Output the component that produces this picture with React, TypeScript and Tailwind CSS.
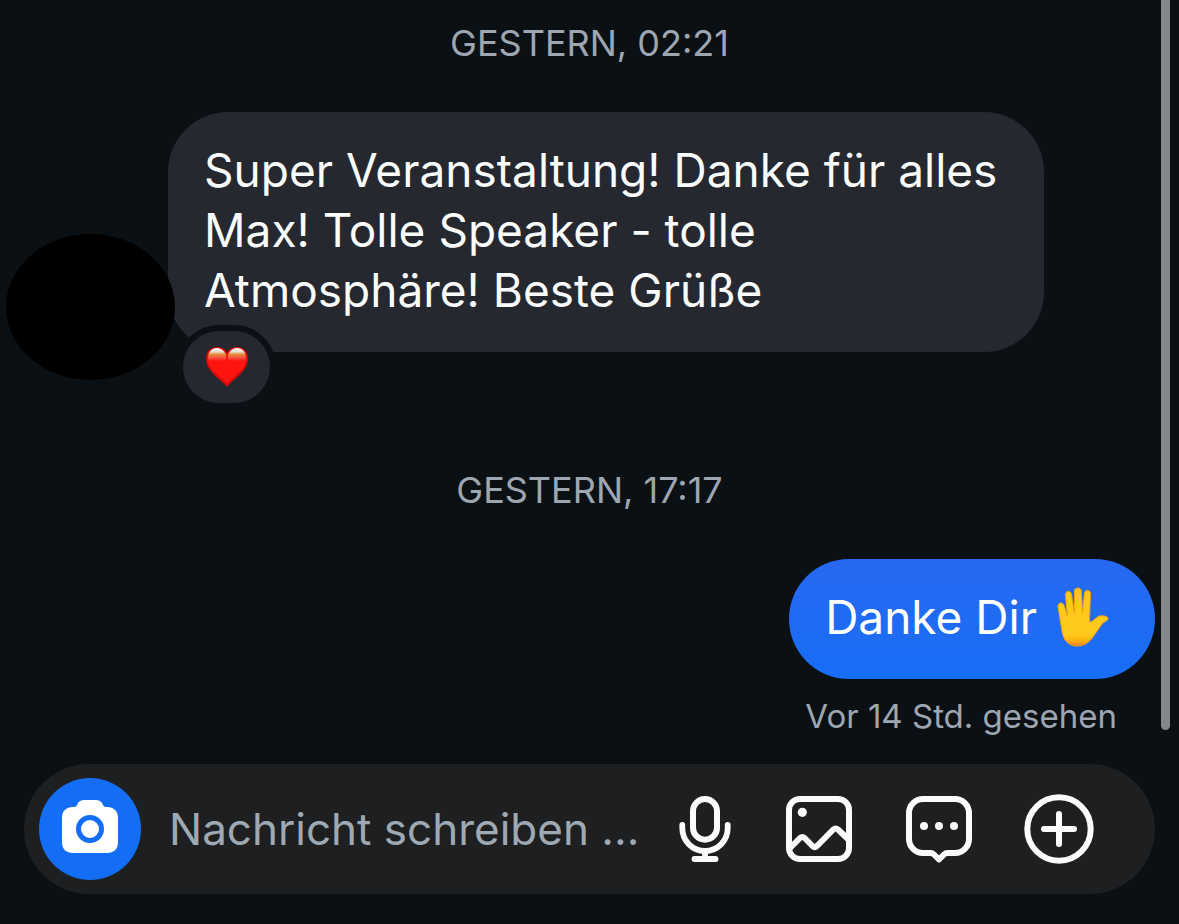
import type { ReactNode } from 'react'

function TimeStamp({ children }: { children: ReactNode }) {
  return <p className="text-center text-4xl leading-[46px] text-[#9ea6b1]">{children}</p>
}

function Heart() {
  return (
    <svg width="44" height="42" viewBox="0 0 44 42" role="img" aria-label="Herz">
      <defs>
        <linearGradient id="shine" x1="0" y1="0" x2="0" y2="1">
          <stop offset="0" stopColor="#fff" />
          <stop offset="0.3" stopColor="#e8dccb" />
          <stop offset="0.5" stopColor="#e08a32" />
          <stop offset="0.75" stopColor="#fa5048" />
          <stop offset="1" stopColor="#ff1410" />
        </linearGradient>
      </defs>
      <path d="M22 41C17 34 1 26 1 12.500C1 5 6 1 12 1C17 1 20.500 3.500 22 7C23.500 3.500 27 1 32 1C38 1 43 5 43 12.500C43 26 27 34 22 41Z" fill="#d90a0a" />
      <path d="M22 37.500C17 31 2.500 24 2.500 12.500C2.500 6 7 2.500 12 2.500C17 2.500 20.500 6 22 9.500C23.500 6 27 2.500 32 2.500C37 2.500 41.500 6 41.500 12.500C41.500 24 27 31 22 37.500Z" fill="#ff1410" />
      <path d="M3.500 15C1.500 6 7 2 12 2C16 2 19.500 5 21 9C21.500 13 20 15 20 15Z" fill="url(#shine)" />
      <path d="M40.500 15C42.500 6 37 2 32 2C28 2 24.500 5 23 9C22.500 13 24 15 24 15Z" fill="url(#shine)" />
    </svg>
  )
}

function Hand() {
  return (
    <svg width="52" height="60" viewBox="0 0 52 60" role="img" aria-label="Erhobene Hand">
      <defs>
        <linearGradient id="palm" x1="0" y1="0" x2="0" y2="1">
          <stop offset="0.8" stopColor="#ffca1b" />
          <stop offset="0.92" stopColor="#fdae10" />
          <stop offset="1" stopColor="#e8762d" />
        </linearGradient>
      </defs>
      <path
        d="M5 44L1 19.500C.5 15.500 6 14.500 7 18.500L10.500 29L8.500 8C8.300 3.300 13.800 3 14.500 7.500L17.500 27L17.500 4C17.600 0 24.200 0 24.400 4L25.500 26L27.500 6C28 2 33.700 2.500 33.400 7L32.500 33C32.500 35 34 35.500 35.500 34L40.500 30C43 28 49.500 28.500 51 31C52 33.500 47 34.500 45 37L38 47C34 54 28 59 20 59C11 59 6.500 53 5 44Z"
        fill="url(#palm)"
        stroke="#f5a20c"
      />
    </svg>
  )
}

function CameraIcon() {
  return (
    <svg width="56" height="54" viewBox="0 0 56 54" aria-hidden="true">
      <path d="M11 7H12C14 7 14.500 6 15.500 4C17 1 19 0 22 0H34C37 0 39 1 40.500 4C41.500 6 42 7 44 7H45C52 7 56 11 56 18V42C56 49 52 53 45 53H11C4 53 0 49 0 42V18C0 11 4 7 11 7Z" fill="#fff" />
      <circle cx="28" cy="29" r="11.500" fill="none" stroke="#146ef5" strokeWidth="5" />
    </svg>
  )
}

function Icon({ children }: { children: ReactNode }) {
  return (
    <svg
      className="size-[72px]"
      viewBox="0 0 72 72"
      fill="none"
      stroke="#fafbfb"
      strokeWidth="6"
      strokeLinecap="round"
      strokeLinejoin="round"
      aria-hidden="true"
    >
      {children}
    </svg>
  )
}

const ACTIONS = [
  {
    label: 'Sprachnachricht',
    icon: (
      <Icon>
        <rect x="30" y="6" width="24" height="40.700" rx="12" />
        <path d="M19.300 32V35.300A22.700 22.700 0 0 0 64.700 35.300V32M42 58V66M31.500 66H52.500" strokeWidth="5.800" />
      </Icon>
    ),
  },
  {
    label: 'Foto',
    icon: (
      <Icon>
        <rect x="6" y="6" width="60" height="60" rx="11" />
        <circle cx="19.300" cy="19.300" r="4.600" fill="#fafbfb" stroke="none" />
        <path d="M7 55L17 45Q19.300 43 21.600 45L29.500 53Q31.700 55 34 53L50.300 36.500Q52.600 34.500 55 36.500L66 47" />
      </Icon>
    ),
  },
  {
    label: 'Kurzantwort',
    icon: (
      <Icon>
        <path d="M20 6H52A14 14 0 0 1 66 20V46A14 14 0 0 1 52 60H44.500Q42.500 60 41 61.500L36 66.500L31 61.500Q29.500 60 27.500 60H20A14 14 0 0 1 6 46V20A14 14 0 0 1 20 6Z" />
        <g fill="#fafbfb" stroke="none">
          <circle cx="21" cy="33" r="4" />
          <circle cx="36" cy="33" r="4" />
          <circle cx="51" cy="33" r="4" />
        </g>
      </Icon>
    ),
  },
  {
    label: 'Mehr',
    icon: (
      <Icon>
        <circle cx="36" cy="36" r="31.700" />
        <path d="M36 21V51M21 36H51" />
      </Icon>
    ),
  },
]

function Composer() {
  return (
    <form className="mx-6 mt-6 mb-[30px] flex items-center rounded-full bg-[#1e1f21] py-3.5 pr-[60px] pl-[15px]">
      <button type="button" aria-label="Kamera" className="flex size-[102px] shrink-0 items-center justify-center rounded-full bg-[#146ef5] pb-1">
        <CameraIcon />
      </button>
      <input
        type="text"
        aria-label="Nachricht schreiben"
        placeholder="Nachricht schreiben ..."
        className="ml-7 min-w-0 flex-1 bg-transparent text-[44px] text-white outline-none placeholder:text-[#9ea9b4]"
      />
      <div className="flex shrink-0 gap-12">
        {ACTIONS.map((action) => (
          <button key={action.label} type="button" aria-label={action.label}>
            {action.icon}
          </button>
        ))}
      </div>
    </form>
  )
}

export default function App() {
  return (
    <div className="flex min-h-screen flex-col bg-[#0b1014] font-[Inter,sans-serif]">
      <main className="relative flex-1 pt-5">
        <TimeStamp>GESTERN, 02:21</TimeStamp>

        <div className="mt-[46px] flex items-end pl-1.5">
          <div className="z-10 -mr-[7px] -mb-7 h-[146px] w-[169px] shrink-0 rounded-[50%] bg-black" />
          <div className="relative max-w-[876px] flex-1 rounded-[60px] bg-[#25282f] px-9 pt-7 pb-8">
            <p className="text-[46px] leading-[60px] text-[#fafbfb]">
              Super Veranstaltung! Danke für alles Max! Tolle Speaker - tolle Atmosphäre! Beste Grüße
            </p>
            <button
              type="button"
              aria-label="Reaktion: Herz"
              className="absolute -bottom-[57px] left-[9px] flex h-[84px] w-[99px] items-center justify-center rounded-[42px] border-6 border-[#0b1014] bg-[#25282f]"
            >
              <Heart />
            </button>
          </div>
        </div>

        <div className="mt-[115px]">
          <TimeStamp>GESTERN, 17:17</TimeStamp>
        </div>

        <div className="mt-[46px] mr-6 flex flex-col items-end">
          <p className="flex items-center gap-5 rounded-full bg-linear-to-b from-[#2768f0] to-[#176ef6] pt-7 pr-[46px] pb-8 pl-9 text-[46px] leading-[60px] text-white">
            Danke Dir <Hand />
          </p>
          <p className="mt-[15px] mr-[38px] text-[33px] leading-[44px] text-[#9ea6b1]">Vor 14 Std. gesehen</p>
        </div>

        <div className="absolute top-0 right-[9px] h-[730px] w-[9px] rounded-b-full bg-[#85888a]" />
      </main>
      <Composer />
    </div>
  )
}
